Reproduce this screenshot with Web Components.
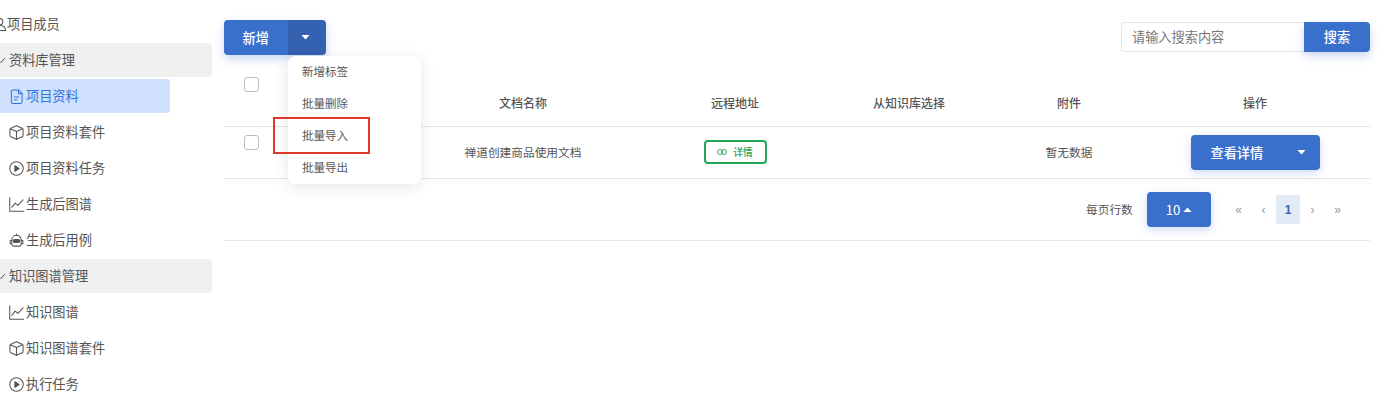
<!DOCTYPE html>
<html lang="zh">
<head>
<meta charset="utf-8">
<title>项目资料</title>
<style>
  html,body{margin:0;height:403px;overflow:hidden;background:#fff;}
  body{display:flex;font-family:"Noto Sans CJK SC","Noto Sans",sans-serif;color:#555;}
</style>
</head>
<body>
<side-nav>
  <nav-row kind="top" icon="users" label="项目成员"></nav-row>
  <nav-row kind="group" label="资料库管理"></nav-row>
  <nav-row kind="active" icon="doc" label="项目资料"></nav-row>
  <nav-row icon="box" label="项目资料套件"></nav-row>
  <nav-row icon="play" label="项目资料任务"></nav-row>
  <nav-row icon="chart" label="生成后图谱"></nav-row>
  <nav-row icon="robot" label="生成后用例"></nav-row>
  <nav-row kind="group" label="知识图谱管理"></nav-row>
  <nav-row icon="chart" label="知识图谱"></nav-row>
  <nav-row icon="box" label="知识图谱套件"></nav-row>
  <nav-row icon="play" label="执行任务"></nav-row>
</side-nav>
<main-panel>
  <tool-bar>
    <add-menu slot="left"></add-menu>
    <search-box slot="right"></search-box>
  </tool-bar>
  <doc-table></doc-table>
  <table-pager></table-pager>
</main-panel>

<script>
const ICONS = {
  users: '<circle cx="8" cy="5" r="3.500"/><path d="M1.500 14.500c0-3.500 2.500-5.500 6.500-5.500s6.500 2 6.500 5.500z"/>',
  doc: '<path d="M4.500 1h5.500l4 4v8.500a2 2 0 0 1-2 2H4.500a2 2 0 0 1-2-2V3a2 2 0 0 1 2-2z"/><path d="M10 1v4h4M5.500 8.500h5M5.500 11.500h3"/>',
  box: '<path d="M8 .8l6 2.700a1.500 1.500 0 0 1 1 1.400v6.200a1.500 1.500 0 0 1-1 1.400l-6 2.700-6-2.700a1.500 1.500 0 0 1-1-1.400V4.900a1.500 1.500 0 0 1 1-1.400z"/><path d="M1.300 4L8 7l6.700-3M8 7v8.200"/>',
  play: '<circle cx="8" cy="8" r="7.200"/><path d="M6.300 5l4.500 3-4.500 3z" fill="currentColor"/>',
  chart: '<path d="M.8 .8v14.400h14.700"/><path d="M3 11l3.500-4.500 3 2.500 5.500-6"/>',
  robot: '<path d="M3 7a5 4.500 0 0 1 10 0v5a2 2 0 0 1-2 2H5a2 2 0 0 1-2-2z"/><path d="M3 8H1.200v3.500H3M13 8h1.800v3.500H13M8 2.500V1"/><rect x="4.500" y="7" width="7" height="3" rx="1.500" fill="currentColor"/>'
};
const svgIcon = (n) => `<svg width="15" height="15" viewBox="0 0 16 16" fill="none" stroke="currentColor" stroke-width="1.100" stroke-linejoin="round" stroke-linecap="round">${ICONS[n]}</svg>`;
const caret = (up) => `<svg width="9" height="5" viewBox="0 0 9 5" fill="#fff"><path d="${up ? 'M0.500 5L4.500 0.500 8.500 5z' : 'M0.500 0L4.500 4.500 8.500 0z'}"/></svg>`;

class SideNav extends HTMLElement {
  connectedCallback() {
    this.attachShadow({ mode: 'open' }).innerHTML = `<style>
      :host{display:block;width:212px;flex:none;overflow:hidden;padding-top:7px;box-sizing:border-box;height:403px;}
      .list{display:flex;flex-direction:column;gap:2px;}
    </style><div class="list"><slot></slot></div>`;
  }
}
customElements.define('side-nav', SideNav);

class NavRow extends HTMLElement {
  connectedCallback() {
    const kind = this.getAttribute('kind') || 'item';
    const icon = this.getAttribute('icon');
    const label = this.getAttribute('label');
    const lead = kind === 'group'
      ? '<svg class="chk" width="6" height="6" viewBox="0 0 6 6" fill="none" stroke="#555" stroke-width="1"><path d="M0 4.500L1 5.500 5 1"/></svg>'
      : `<span class="ic">${svgIcon(icon)}</span>`;
    this.attachShadow({ mode: 'open' }).innerHTML = `<style>
      :host{display:flex;align-items:center;height:34px;font-size:13.200px;line-height:34px;color:#555;white-space:nowrap;border-radius:0 3px 3px 0;box-sizing:border-box;}
      :host([kind="group"]){background:#f0f0f0;}
      :host([kind="active"]){background:#cfe1fc;color:#2f74e0;width:170px;}
      .wrap{display:flex;align-items:center;padding-left:9px;}
      :host([kind="top"]) .wrap{padding-left:0;margin-left:-8px;}
      :host([kind="group"]) .wrap{padding-left:0;}
      .ic{display:flex;width:15px;margin-right:2px;}
      :host([kind="top"]) .ic{margin-right:0;}
      .chk{margin-right:3px;}
    </style><div class="wrap">${lead}<span class="t">${label}</span></div>`;
  }
}
customElements.define('nav-row', NavRow);

class MainPanel extends HTMLElement {
  connectedCallback() {
    this.attachShadow({ mode: 'open' }).innerHTML = `<style>
      :host{display:block;position:relative;margin-left:12px;width:1146px;padding-top:20px;flex:none;}
    </style><slot></slot>`;
  }
}
customElements.define('main-panel', MainPanel);

class ToolBar extends HTMLElement {
  connectedCallback() {
    this.attachShadow({ mode: 'open' }).innerHTML = `<style>
      :host{display:flex;justify-content:space-between;align-items:flex-start;height:35px;}
    </style><slot name="left"></slot><slot name="right"></slot>`;
  }
}
customElements.define('tool-bar', ToolBar);

class AddMenu extends HTMLElement {
  connectedCallback() {
    const items = ['新增标签', '批量删除', '批量导入', '批量导出'];
    this.attachShadow({ mode: 'open' }).innerHTML = `<style>
      :host{display:block;position:relative;z-index:5;margin-left:-.5px;}
      .btn{display:flex;width:102px;height:35px;border-radius:4px;overflow:hidden;color:#fff;font-size:13.200px;font-weight:500;box-shadow:0 4px 10px rgba(56,112,204,.28);}
      .main{width:64.500px;background:#3870cc;display:flex;align-items:center;justify-content:center;box-sizing:border-box;}
      .drop{flex:1;background:#3562b0;display:flex;align-items:center;justify-content:center;padding-right:2px;}
      .menu{position:absolute;left:64.500px;top:36px;width:133px;height:128px;background:#fff;border-radius:8px;box-shadow:0 3px 16px rgba(0,0,0,.1);font-size:11.500px;color:#555;}
      .menu div{height:32px;line-height:31px;padding-left:14px;}
      .mark{position:absolute;left:49px;top:97px;width:97px;height:37px;box-sizing:border-box;border:2px solid #e0392b;}
    </style>
    <div class="btn"><span class="main">新增</span><span class="drop">${caret(false)}</span></div>
    <div class="menu">${items.map((t) => `<div>${t}</div>`).join('')}</div>
    <div class="mark"></div>`;
  }
}
customElements.define('add-menu', AddMenu);

class SearchBox extends HTMLElement {
  connectedCallback() {
    this.attachShadow({ mode: 'open' }).innerHTML = `<style>
      :host{display:flex;height:30px;margin-top:2px;font-size:13.200px;}
      .inp{width:183px;box-sizing:border-box;border:1px solid #e6e6e6;border-right:none;border-radius:4px 0 0 4px;color:#777;line-height:28px;padding-left:10px;}
      .go{width:66px;background:#3870cc;color:#fff;font-weight:500;text-align:center;line-height:30px;border-radius:0 4px 4px 0;box-shadow:0 4px 10px rgba(56,112,204,.28);}
    </style><div class="inp">请输入搜索内容</div><div class="go">搜索</div>`;
  }
}
customElements.define('search-box', SearchBox);

class DocTable extends HTMLElement {
  connectedCallback() {
    const cols = '172px 254px 170px 178px 142px 230px';
    const heads = ['文档名称', '远程地址', '从知识库选择', '附件', '操作'];
    this.attachShadow({ mode: 'open' }).innerHTML = `<style>
      :host{display:block;font-size:11.700px;color:#555;}
      .r{display:grid;grid-template-columns:${cols};border-bottom:1px solid #e6e6e6;box-sizing:border-box;}
      .head{height:72px;}
      .head .c{display:flex;justify-content:center;align-items:flex-end;padding-bottom:14px;font-size:12px;font-weight:500;line-height:18px;}
      .body{height:52px;}
      .body .c{display:flex;justify-content:center;align-items:center;padding-bottom:1px;}
      .body .txt{padding-bottom:3px;}
      .cb{width:15px;height:15px;box-sizing:border-box;border:1.500px solid #bdbdbd;border-radius:3px;margin-left:20px;}
      .head .cb{margin-top:22px;}
      .body .cb{margin-top:8px;}
      .tag{display:flex;align-items:center;justify-content:center;gap:6px;width:63px;height:24px;box-sizing:border-box;border:2px solid #27a35b;border-radius:4px;color:#27a35b;font-size:9.700px;font-weight:500;}
      .view{display:flex;align-items:center;width:129px;height:35px;background:#3870cc;border-radius:4px;color:#fff;font-size:13.200px;font-weight:500;box-shadow:0 3px 8px rgba(56,112,204,.25);box-sizing:border-box;padding:0 14px 0 20px;justify-content:space-between;}
    </style>
    <div class="r head"><div><div class="cb"></div></div>${heads.map((h) => `<div class="c">${h}</div>`).join('')}</div>
    <div class="r body">
      <div><div class="cb"></div></div>
      <div class="c txt">禅道创建商品使用文档</div>
      <div class="c"><span class="tag"><svg width="10" height="6" viewBox="0 0 10 6" fill="none" stroke="#27a35b" stroke-width=".9"><rect x=".5" y=".5" width="5" height="5" rx="2.500"/><rect x="4.500" y=".5" width="5" height="5" rx="2.500"/></svg>详情</span></div>
      <div class="c"></div>
      <div class="c txt">暂无数据</div>
      <div class="c"><span class="view">查看详情${caret(false)}</span></div>
    </div>`;
  }
}
customElements.define('doc-table', DocTable);

class TablePager extends HTMLElement {
  connectedCallback() {
    this.attachShadow({ mode: 'open' }).innerHTML = `<style>
      :host{display:flex;align-items:center;height:62px;box-sizing:border-box;border-bottom:1px solid #e6e6e6;font-size:11.700px;color:#555;padding-left:862px;}
      .lbl{width:61px;padding-bottom:2px;}
      .size{display:flex;align-items:center;justify-content:center;gap:3px;width:64px;height:35px;background:#3870cc;border-radius:4px;color:#fff;font-size:13.200px;box-shadow:0 3px 8px rgba(56,112,204,.25);}
      .pages{display:flex;align-items:center;margin-left:15px;color:#999;font-family:"Liberation Sans",sans-serif;font-size:12px;}
      .p{display:flex;align-items:center;justify-content:center;width:25px;height:29px;}
      .cur{width:24px;background:#e2eaf6;color:#3a62a8;border-radius:3px;font-weight:700;}
    </style>
    <span class="lbl">每页行数</span>
    <span class="size">10${caret(true)}</span>
    <div class="pages"><span class="p">«</span><span class="p">‹</span><span class="p cur">1</span><span class="p">›</span><span class="p">»</span></div>`;
  }
}
customElements.define('table-pager', TablePager);
</script>
</body>
</html>
